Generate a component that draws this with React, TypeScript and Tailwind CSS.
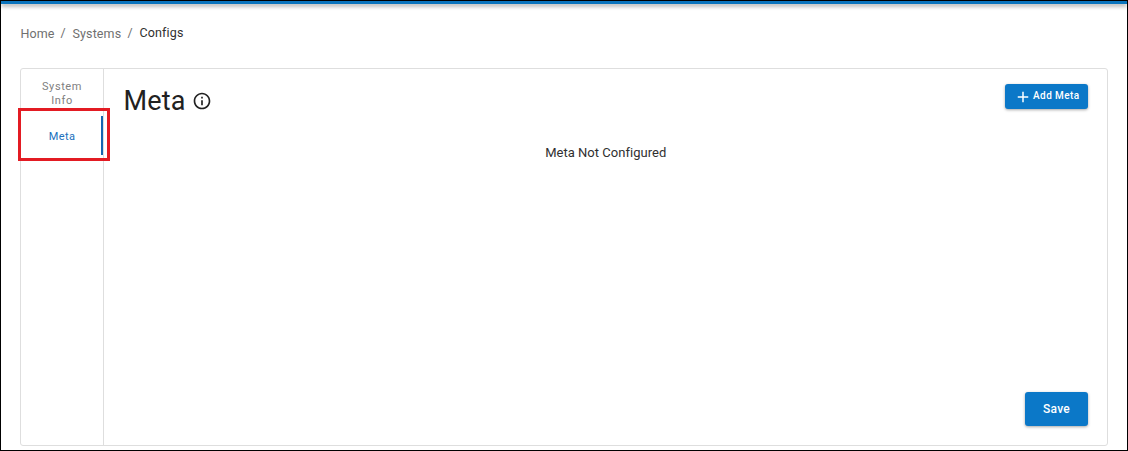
import React from "react";
import { MdAdd, MdInfoOutline } from "react-icons/md";

function Breadcrumbs() {
  return (
    <nav className="flex h-[20px] text-[12.5px] leading-5 text-[#707070]">
      <a className="w-[40px] tracking-[0.12px]">Home</a>
      <span className="-mt-px w-[12px]">/</span>
      <a className="w-[55px] tracking-[0.12px]">Systems</a>
      <span className="-mt-px w-[12px]">/</span>
      <span className="-mt-px tracking-[0.14px] text-[#303030]">Configs</span>
    </nav>
  );
}

function SideTabs() {
  return (
    <aside className="w-[83px] shrink-0 border-r border-[#dedede] text-center text-[11px] leading-[14px] tracking-[0.6px]">
      <div className="flex h-[47px] items-center justify-center px-4 pt-[2px] text-[#808080]">System Info</div>
      <div className="relative flex h-[39px] items-center justify-center border-r-2 border-[#1565b0] pt-[2px] pl-[2px] tracking-[0.4px] text-[#2070bd]">
        Meta
        <div className="absolute -top-[8px] -left-[3px] h-[53px] w-[92px] border-3 border-[#e31b23]" />
      </div>
    </aside>
  );
}

export default function App() {
  return (
    <div className="flex h-[451px] w-[1128px] flex-col overflow-hidden border border-black bg-white font-['Roboto',sans-serif]">
      <header className="h-[3px] shrink-0 bg-[#0b74bd] shadow-[0_2px_4px_rgba(0,0,0,0.4)]" />
      <div className="pt-[20px] pl-[19.5px]">
        <Breadcrumbs />
      </div>
      <main className="mt-[24px] ml-[19px] flex h-[378px] w-[1088px] rounded-[3px] border border-[#dedede]">
        <SideTabs />
        <section className="flex grow flex-col pt-[15px] pr-[19px] pb-[19px] pl-[19.5px]">
          <div className="flex items-start justify-between">
            <h1 className="flex items-center text-[27px] leading-[34px] tracking-[0.2px] text-[#212121]">
              Meta
              <MdInfoOutline className="ml-[6px] size-5" />
            </h1>
            <button className="flex h-[25px] w-[83px] items-center rounded-[3px] bg-[#0b78c8] pl-[9px] text-[10px] font-medium tracking-[0.43px] text-white shadow-[0_1px_3px_rgba(0,0,0,0.35)]">
              <MdAdd className="mr-[1px] size-[18px] shrink-0" />
              <span className="-mt-[2px] whitespace-nowrap">Add Meta</span>
            </button>
          </div>
          <p className="mt-[25px] text-center text-[13px] leading-5 tracking-[0.03px] text-[#303030]">Meta Not Configured</p>
          <button className="mt-auto h-[34px] w-[63px] self-end rounded-[3px] bg-[#0b78c8] text-[12px] font-medium tracking-[0.2px] text-white shadow-[0_1px_3px_rgba(0,0,0,0.35)]">
            Save
          </button>
        </section>
      </main>
    </div>
  );
}
